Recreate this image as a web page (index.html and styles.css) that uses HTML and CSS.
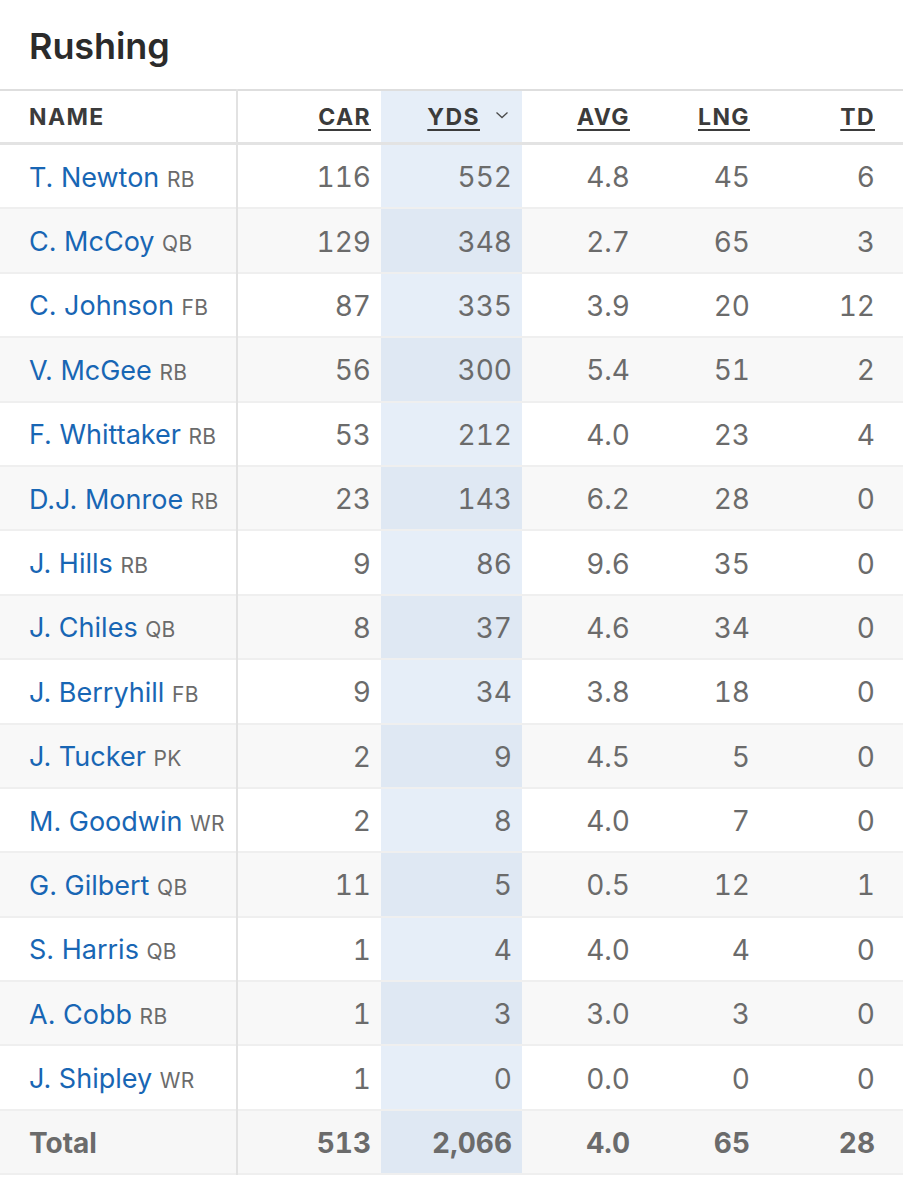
FILE: index.html
```html
<!DOCTYPE html>
<html>
<head>
<meta charset="utf-8">
<link rel="stylesheet" href="styles.css">
</head>
<body>
<h2 class="title">Rushing</h2>
<table class="stats">
  <colgroup>
    <col class="c-name"><col class="c-car"><col class="c-yds"><col class="c-avg"><col class="c-lng"><col class="c-td">
  </colgroup>
  <thead>
    <tr>
      <th class="name">NAME</th>
      <th><span class="sort">CAR</span></th>
      <th class="hl"><span class="sort">YDS</span><svg class="chev" viewBox="0 0 14 8" width="14" height="8"><path d="M1.5 1.5 L7 6.5 L12.5 1.5" fill="none" stroke="#4a4a4a" stroke-width="1.3"/></svg></th>
      <th><span class="sort">AVG</span></th>
      <th><span class="sort">LNG</span></th>
      <th class="last"><span class="sort">TD</span></th>
    </tr>
  </thead>
  <tbody>
    <tr><td class="name"><a>T. Newton</a> <span class="pos">RB</span></td><td>116</td><td class="hl">552</td><td>4.8</td><td>45</td><td class="last">6</td></tr>
    <tr><td class="name"><a>C. McCoy</a> <span class="pos">QB</span></td><td>129</td><td class="hl">348</td><td>2.7</td><td>65</td><td class="last">3</td></tr>
    <tr><td class="name"><a>C. Johnson</a> <span class="pos">FB</span></td><td>87</td><td class="hl">335</td><td>3.9</td><td>20</td><td class="last">12</td></tr>
    <tr><td class="name"><a>V. McGee</a> <span class="pos">RB</span></td><td>56</td><td class="hl">300</td><td>5.4</td><td>51</td><td class="last">2</td></tr>
    <tr><td class="name"><a>F. Whittaker</a> <span class="pos">RB</span></td><td>53</td><td class="hl">212</td><td>4.0</td><td>23</td><td class="last">4</td></tr>
    <tr><td class="name"><a>D.J. Monroe</a> <span class="pos">RB</span></td><td>23</td><td class="hl">143</td><td>6.2</td><td>28</td><td class="last">0</td></tr>
    <tr><td class="name"><a>J. Hills</a> <span class="pos">RB</span></td><td>9</td><td class="hl">86</td><td>9.6</td><td>35</td><td class="last">0</td></tr>
    <tr><td class="name"><a>J. Chiles</a> <span class="pos">QB</span></td><td>8</td><td class="hl">37</td><td>4.6</td><td>34</td><td class="last">0</td></tr>
    <tr><td class="name"><a>J. Berryhill</a> <span class="pos">FB</span></td><td>9</td><td class="hl">34</td><td>3.8</td><td>18</td><td class="last">0</td></tr>
    <tr><td class="name"><a>J. Tucker</a> <span class="pos">PK</span></td><td>2</td><td class="hl">9</td><td>4.5</td><td>5</td><td class="last">0</td></tr>
    <tr><td class="name"><a>M. Goodwin</a> <span class="pos">WR</span></td><td>2</td><td class="hl">8</td><td>4.0</td><td>7</td><td class="last">0</td></tr>
    <tr><td class="name"><a>G. Gilbert</a> <span class="pos">QB</span></td><td>11</td><td class="hl">5</td><td>0.5</td><td>12</td><td class="last">1</td></tr>
    <tr><td class="name"><a>S. Harris</a> <span class="pos">QB</span></td><td>1</td><td class="hl">4</td><td>4.0</td><td>4</td><td class="last">0</td></tr>
    <tr><td class="name"><a>A. Cobb</a> <span class="pos">RB</span></td><td>1</td><td class="hl">3</td><td>3.0</td><td>3</td><td class="last">0</td></tr>
    <tr><td class="name"><a>J. Shipley</a> <span class="pos">WR</span></td><td>1</td><td class="hl">0</td><td>0.0</td><td>0</td><td class="last">0</td></tr>
  </tbody>
  <tfoot>
    <tr><td class="name">Total</td><td>513</td><td class="hl">2,066</td><td>4.0</td><td>65</td><td class="last">28</td></tr>
  </tfoot>
</table>
</body>
</html>
```
FILE: styles.css
```css
html, body {
  margin: 0;
  padding: 0;
  background: #ffffff;
}
body {
  font-family: Inter, "Open Sans", "Liberation Sans", sans-serif;
  color: #2a2a2a;
}
.title {
  margin: 0;
  padding: 26px 29px 0;
  height: 64px;
  box-sizing: border-box;
  font-size: 36px;
  font-weight: 600;
  line-height: 40px;
  color: #2b2b2b;
  letter-spacing: -0.1px;
}
.stats {
  width: 903px;
  border-collapse: collapse;
  table-layout: fixed;
  margin-top: 25px;
}
.c-name { width: 237px; }
.c-car { width: 144px; }
.c-yds { width: 141px; }
.c-avg { width: 118px; }
.c-lng { width: 120px; }
.c-td { width: 143px; }

th, td {
  padding: 0 10px 0 0;
  text-align: right;
  white-space: nowrap;
}
thead tr {
  border-top: 2px solid #dedede;
  border-bottom: 3px solid #e3e3e3;
}
th {
  height: 51px;
  font-size: 23px;
  font-weight: 700;
  color: #3b3b3b;
  letter-spacing: 1.4px;
}
th.name {
  text-align: left;
}
.sort {
  text-decoration: underline;
  text-decoration-thickness: 2px;
  text-underline-offset: 4px;
}
th.hl {
  padding-right: 13px;
}
.chev {
  margin-left: 15px;
  vertical-align: 6px;
}
.name {
  padding-left: 29px;
  text-align: left;
  border-right: 2px solid #e2e2e2;
}
.last {
  padding-right: 28px;
}
td {
  height: 60.4px;
  padding-top: 2px;
  font-size: 28px;
  color: #6b6b6b;
  font-weight: 400;
  font-variant-numeric: tabular-nums;
}
td.name {
  font-size: 27px;
  font-variant-numeric: normal;
}
tbody tr, tfoot tr {
  border-bottom: 2px solid #efefef;
}
tbody tr:nth-child(even) {
  background: #f8f8f8;
}
td.hl, th.hl {
  background: #e6eef8;
}
tbody tr:nth-child(even) td.hl {
  background: #dfe8f3;
}
td.name a {
  color: #1866b4;
  text-decoration: none;
}
.pos {
  font-size: 21px;
  color: #6b6b6b;
  letter-spacing: 0.3px;
}
tfoot tr {
  background: #f7f7f7;
}
tfoot td {
  font-weight: 700;
  color: #6b6b6b;
}
tfoot td.name {
  font-size: 28px;
}
tfoot td.hl {
  background: #dfe8f3;
}
```
